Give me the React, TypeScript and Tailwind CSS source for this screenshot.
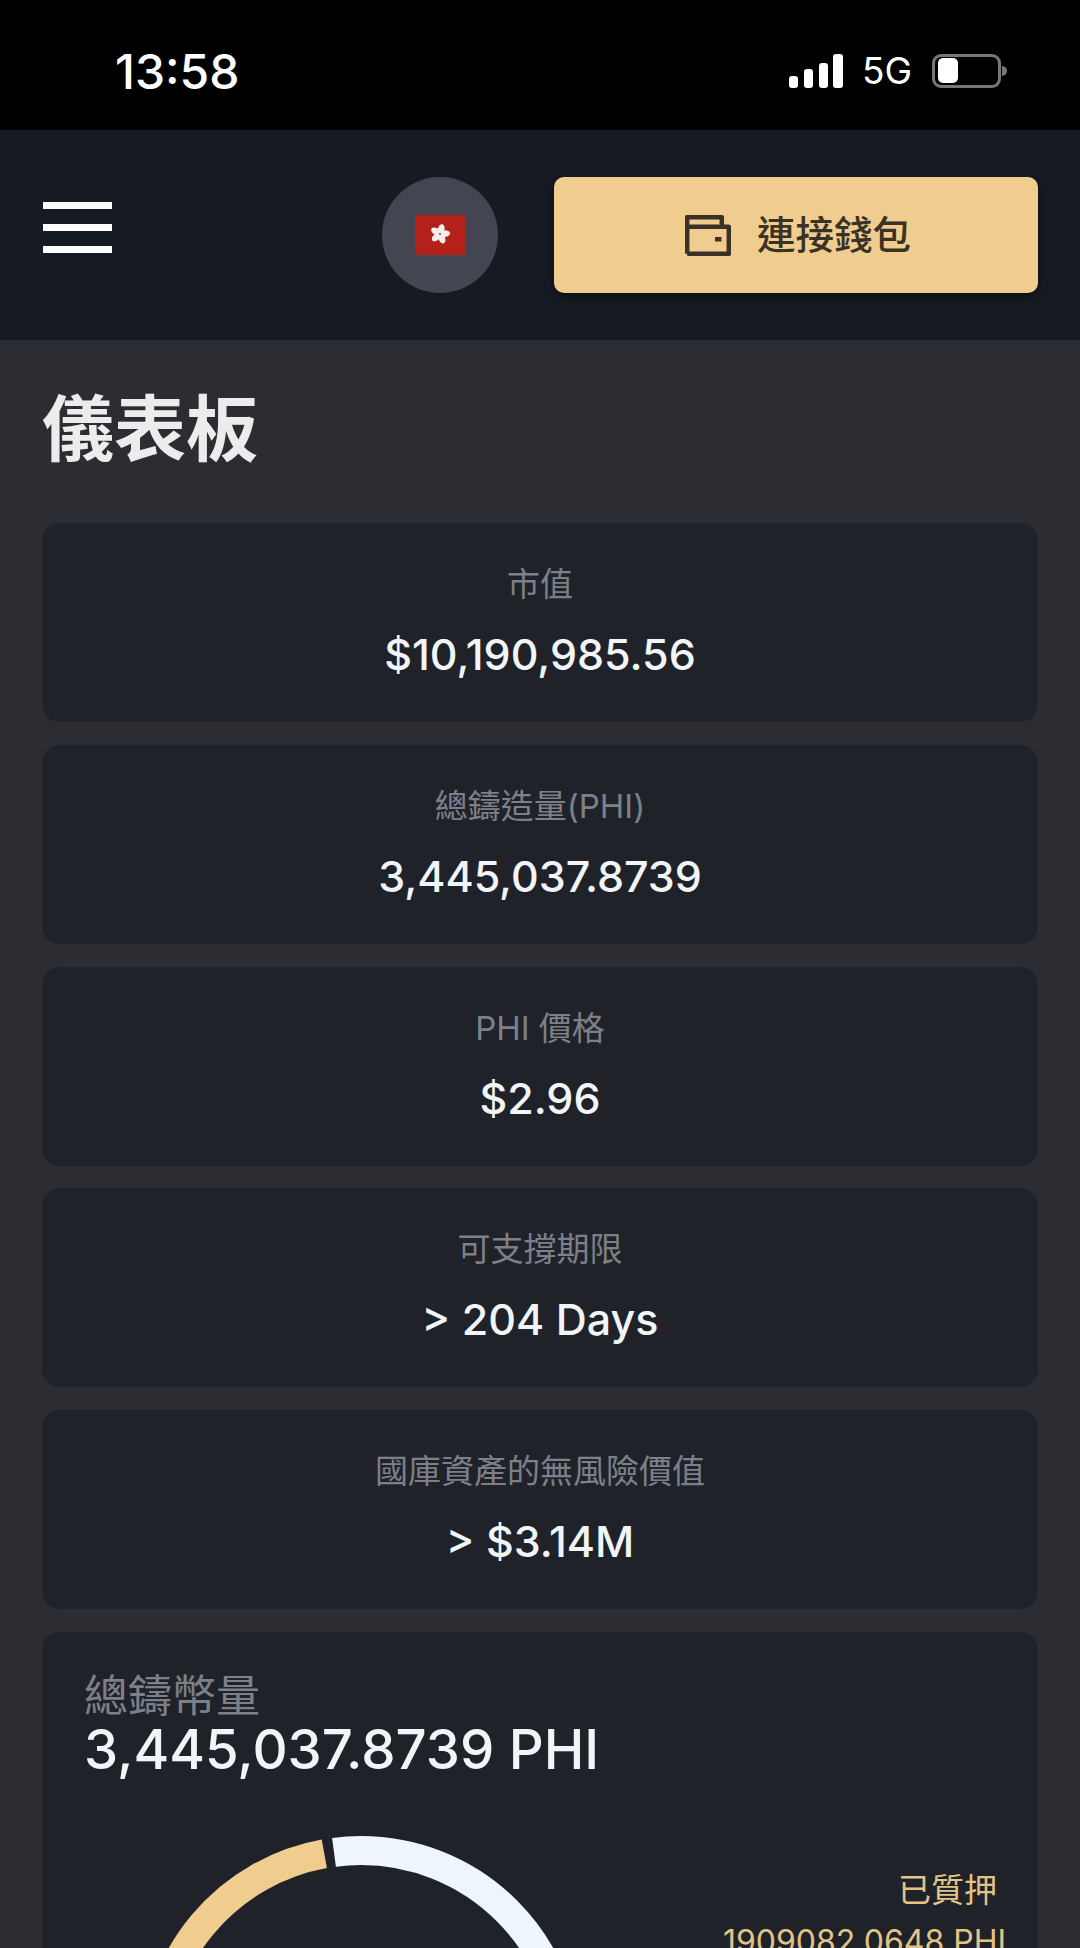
const FONT = "font-['Inter','Noto_Sans_CJK_TC',sans-serif]";

const stats = [
  { label: "市值", value: "$10,190,985.56" },
  { label: "總鑄造量(PHI)", value: "3,445,037.8739" },
  { label: "PHI 價格", value: "$2.96" },
  { label: "可支撐期限", value: "> 204 Days" },
  { label: "國庫資產的無風險價值", value: "> $3.14M" },
];

const StatusBar = () => (
  <div className="flex h-[130px] shrink-0 items-start justify-between bg-black pl-[115px] pr-[73px] text-white">
    <span className="mt-[44px] text-[48px] font-medium leading-[56px]">13:58</span>
    <div className="mt-[54px] flex items-start">
      <svg width="54" height="34" viewBox="0 0 54 34" fill="#fff">
        <rect x="0" y="22" width="9" height="12" rx="3" />
        <rect x="15" y="15" width="9" height="19" rx="3" />
        <rect x="30" y="9" width="9" height="25" rx="3" />
        <rect x="44" y="0" width="10" height="34" rx="3" />
      </svg>
      <span className="ml-[19px] mt-[-3px] text-[37px] leading-[40px]">5G</span>
      <div className="ml-[20px] flex items-center">
        <div className="h-[34px] w-[69px] rounded-[9px] border-[3px] border-[#777] p-[1px] pl-[3px]">
          <div className="h-[25px] w-[20px] rounded-[5px] bg-white" />
        </div>
        <div className="ml-[1px] h-[10px] w-[5px] rounded-r-full bg-[#777]" />
      </div>
    </div>
  </div>
);

const Header = () => (
  <header className="flex h-[210px] shrink-0 items-start bg-[#161a22] pl-[43px] pr-[42px] pt-[47px]">
    <div className="mt-[25px] flex w-[69px] flex-col gap-[15px]">
      <div className="h-[7px] bg-white" />
      <div className="h-[7px] bg-white" />
      <div className="h-[7px] bg-white" />
    </div>
    <div className="ml-[270px] flex h-[116px] w-[116px] items-center justify-center rounded-full bg-[#434651]">
      <svg width="51" height="40" viewBox="0 0 51 40">
        <rect width="51" height="40" fill="#b3211a" />
        <g fill="#f6eeea" transform="translate(25 19)">
          <ellipse cx="0" cy="-5" rx="3.3" ry="5" transform="rotate(14)" />
          <ellipse cx="0" cy="-5" rx="3.3" ry="5" transform="rotate(86)" />
          <ellipse cx="0" cy="-5" rx="3.3" ry="5" transform="rotate(158)" />
          <ellipse cx="0" cy="-5" rx="3.3" ry="5" transform="rotate(230)" />
          <ellipse cx="0" cy="-5" rx="3.3" ry="5" transform="rotate(302)" />
        </g>
        <circle cx="25" cy="19" r="1" fill="#b3211a" />
      </svg>
    </div>
    <button className="ml-[56px] flex h-[116px] w-[484px] items-center justify-center gap-[26px] rounded-[10px] bg-[#f0cd8e] pl-[4px] text-[38.5px] font-medium leading-none text-[#3a3226] shadow-[0_4px_10px_rgba(0,0,0,0.45)]">
      <svg width="46" height="41" viewBox="0 0 46 41" fill="none" stroke="#3a3226" strokeWidth="4.5" strokeLinejoin="round">
        <path d="M2.2 38.8V2.2h34.6v9.6" />
        <path d="M2.2 11.8h41.6v27H2.2" />
        <rect x="30" y="22" width="6.5" height="4.5" fill="#3a3226" stroke="none" />
      </svg>
      <span>連接錢包</span>
    </button>
  </header>
);

const StatCard = ({ label, value }: { label: string; value: string }) => (
  <div className="flex h-[199px] flex-col items-center rounded-[18px] bg-[#1f2329] pt-[41px]">
    <span className="text-[33px] leading-[40px] text-[#7d8088]">{label}</span>
    <span className="mt-[24px] text-[43px] font-medium leading-[52px] text-[#f2f5f8]">{value}</span>
  </div>
);

const SupplyCard = () => (
  <div className="h-[400px] shrink-0 rounded-t-[18px] bg-[#1f2329] pl-[42px] pr-[32px] pt-[40px]">
    <div className="text-[44px] leading-[48px] text-[#7d8088]">總鑄幣量</div>
    <div className="text-[54.5px] font-medium leading-[58px] text-[#f2f5f8]">3,445,037.8739 PHI</div>
    <div className="mt-[58px] flex items-start justify-between">
      <svg width="442" height="442" viewBox="0 0 442 442" className="ml-[56px] shrink-0" fill="none" strokeWidth="29">
        <path d="M194 16.3 A206.5 206.5 0 0 1 221 14.5 A206.5 206.5 0 0 1 427.5 221 A206.5 206.5 0 0 1 221 427.5" stroke="#eef5fb" />
        <path d="M184.3 17.8 A206.5 206.5 0 0 0 14.5 221 A206.5 206.5 0 0 0 221 427.5" stroke="#f0cd8e" />
      </svg>
      <div className="mt-[34px] flex flex-col items-end leading-[40px] text-[#e3c487]">
        <span className="mr-[9px] text-[33px]">已質押</span>
        <span className="mt-[12px] whitespace-nowrap text-[32px]">1909082.0648 PHI</span>
      </div>
    </div>
  </div>
);

const App = () => {
  return (
    <div className={`flex h-[1948px] w-[1080px] flex-col overflow-hidden bg-[#2b2d33] ${FONT}`}>
      <StatusBar />
      <Header />
      <main className="flex flex-col px-[42px]">
        <h1 className="mt-[44px] text-[72px] font-semibold leading-[90px] text-[#ececec]">儀表板</h1>
        <div className="mt-[49px] flex flex-col gap-[22.75px]">
          {stats.map((s) => (
            <StatCard key={s.label} label={s.label} value={s.value} />
          ))}
          <SupplyCard />
        </div>
      </main>
    </div>
  );
};

export default App;
